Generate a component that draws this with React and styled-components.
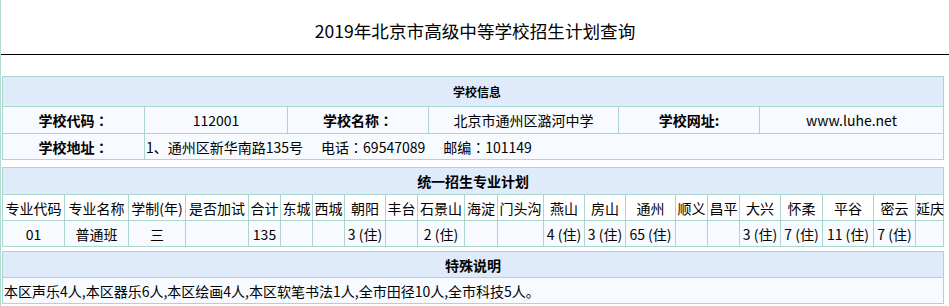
import React from 'react';
import styled, { createGlobalStyle } from 'styled-components';

const GlobalStyle = createGlobalStyle`
  html, body {
    margin: 0;
    padding: 0;
    background: #fff;
  }
  body {
    font-family: 'Noto Sans CJK SC', 'Microsoft YaHei', sans-serif;
    color: #000;
  }
`;

const line = '#aad6cf';

const Page = styled.div`
  min-height: 100vh;
  border-left: 1px solid #b2dbd4;
`;

const Title = styled.h1`
  margin: 0;
  height: 55px;
  padding-top: 7px;
  box-sizing: border-box;
  border-bottom: 1px solid #000;
  display: flex;
  align-items: center;
  justify-content: center;
  font-size: 17.6px;
  font-weight: normal;
`;

const Table = styled.table`
  width: 942px;
  margin: ${(p) => p.$top}px 0 0 1px;
  border-collapse: separate;
  border-spacing: 0;
  table-layout: fixed;
  border-top: 1px solid ${line};
  border-left: 1px solid ${line};
  font-size: 14px;
`;

const Col = styled.col`
  width: ${(p) => p.$w}px;
`;

const Cell = styled.td`
  height: ${(p) => p.$h || 25}px;
  padding: 0 0 0 ${(p) => (p.$left ? 1 : 0)}px;
  border-right: 1px solid ${line};
  border-bottom: 1px solid ${line};
  background: ${(p) => p.$bg || '#f7fbff'};
  text-align: ${(p) => (p.$left ? 'left' : 'center')};
  font-weight: ${(p) => (p.$bold ? 'bold' : 'normal')};
  white-space: nowrap;
  line-height: 20px;
`;

const Head = styled(Cell).attrs({ as: 'th' })`
  background: #dfebfa;
  font-weight: bold;
  font-size: ${(p) => p.$size || 14}px;
  padding-left: ${(p) => p.$shift || 0}px;
`;

/* full-width colon drawn centred, as in the original font */
const Colon = styled.span`
  font-family: 'Noto Sans CJK JP', sans-serif;
`;

const Part = styled.span`
  margin-right: 18px;
`;

const infoCols = [142, 143, 141, 190, 141, 184];
const planCols = [62, 64, 57, 63, 32, 32, 32, 41, 32, 47, 33, 46, 41, 41, 50, 32, 32, 41, 42, 51, 42, 28];

const planHead = [
  '专业代码', '专业名称', '学制(年)', '是否加试', '合计', '东城', '西城', '朝阳', '丰台', '石景山', '海淀',
  '门头沟', '燕山', '房山', '通州', '顺义', '昌平', '大兴', '怀柔', '平谷', '密云', '延庆',
];
const planRow = [
  '01', '普通班', '三', '', '135', '', '', '3 (住)', '', '2 (住)', '', '', '4 (住)', '3 (住)', '65 (住)',
  '', '', '3 (住)', '7 (住)', '11 (住)', '7 (住)', '',
];

export default function App() {
  return (
    <>
      <GlobalStyle />
      <Page>
        <Title>2019年北京市高级中等学校招生计划查询</Title>

        <Table $top={21}>
          <colgroup>
            {infoCols.map((w, i) => (
              <Col key={i} $w={w} />
            ))}
          </colgroup>
          <tbody>
            <tr>
              <Head colSpan={6} $h={29} $size={12} $shift={8}>学校信息</Head>
            </tr>
            <tr>
              <Cell $h={26} $bold>学校代码<Colon>：</Colon></Cell>
              <Cell $h={26}>112001</Cell>
              <Cell $h={26} $bold>学校名称<Colon>：</Colon></Cell>
              <Cell $h={26}>北京市通州区潞河中学</Cell>
              <Cell $h={26} $bold>学校网址:</Cell>
              <Cell $h={26}>www.luhe.net</Cell>
            </tr>
            <tr>
              <Cell $bold>学校地址<Colon>：</Colon></Cell>
              <Cell colSpan={5} $left>
                <Part>1、通州区新华南路135号</Part>
                <Part>电话<Colon>：</Colon>69547089</Part>
                邮编<Colon>：</Colon>101149
              </Cell>
            </tr>
          </tbody>
        </Table>

        <Table $top={7}>
          <colgroup>
            {planCols.map((w, i) => (
              <Col key={i} $w={w} />
            ))}
          </colgroup>
          <tbody>
            <tr>
              <Head colSpan={22} $h={26}>统一招生专业计划</Head>
            </tr>
            <tr>
              {planHead.map((t) => (
                <Cell key={t} $bg="#fff">{t}</Cell>
              ))}
            </tr>
            <tr>
              {planRow.map((t, i) => (
                <Cell key={i}>{t}</Cell>
              ))}
            </tr>
          </tbody>
        </Table>

        <Table $top={4}>
          <tbody>
            <tr>
              <Head>特殊说明</Head>
            </tr>
            <tr>
              <Cell $left>本区声乐4人,本区器乐6人,本区绘画4人,本区软笔书法1人,全市田径10人,全市科技5人。</Cell>
            </tr>
          </tbody>
        </Table>
      </Page>
    </>
  );
}
